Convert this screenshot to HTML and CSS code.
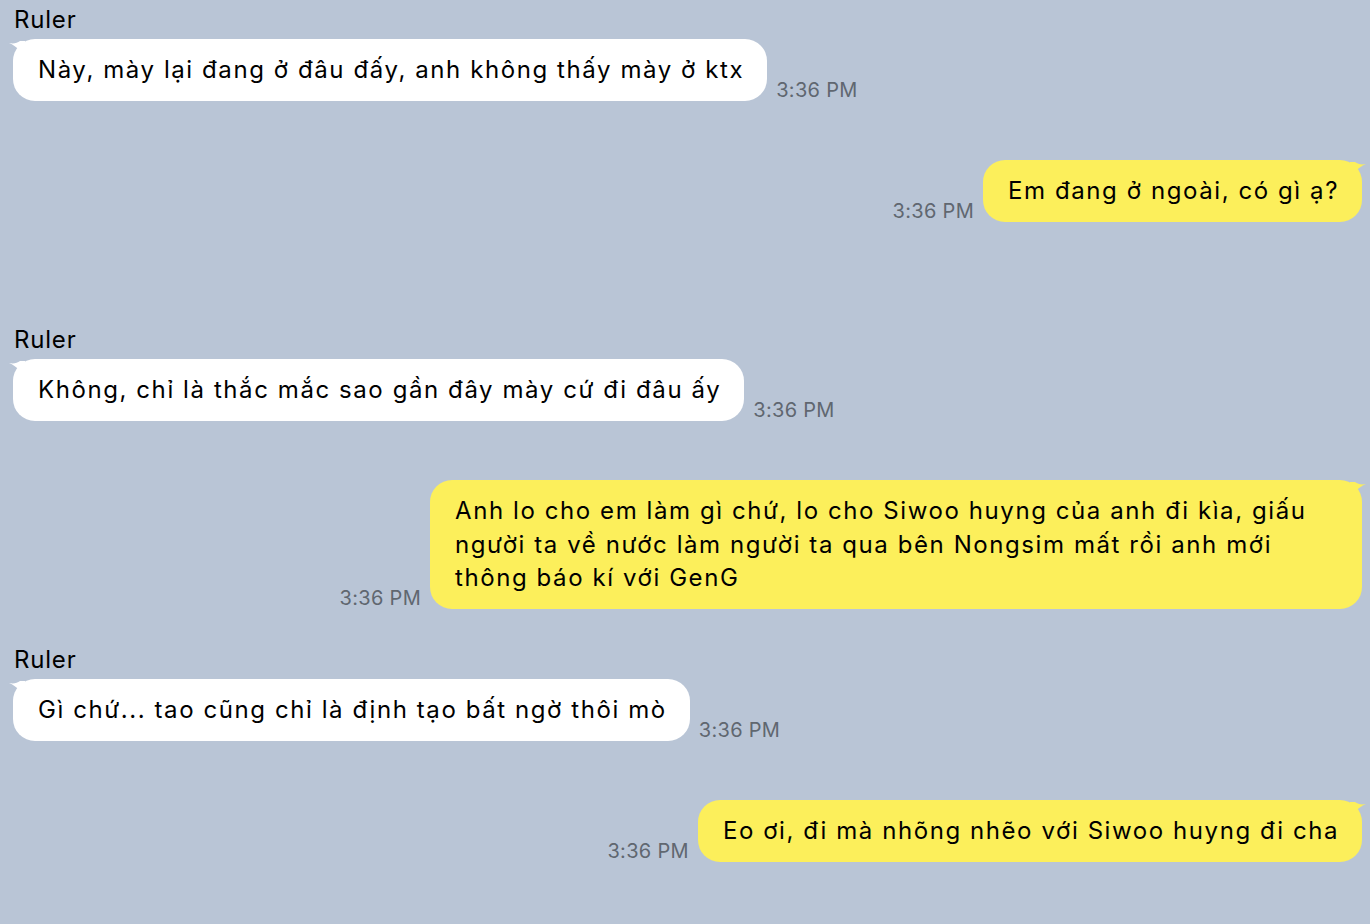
FILE: index.html
```html
<!DOCTYPE html>
<html lang="vi">
<head>
<meta charset="utf-8">
<title>Chat</title>
<link rel="stylesheet" href="styles.css">
</head>
<body>
<div class="chat">
  <div class="slot in">
    <div class="name">Ruler</div>
    <div class="row">
      <div class="bubble white"><svg class="tail tail-l" viewBox="0 0 16 16"><path d="M0 2 C5 3 8 2 11 0 L16 0 L16 16 C13 12 8 5 0 2 Z"/></svg>Này, mày lại đang ở đâu đấy, anh không thấy mày ở ktx</div>
      <div class="time">3:36 PM</div>
    </div>
  </div>
  <div class="slot out">
    <div class="row">
      <div class="time">3:36 PM</div>
      <div class="bubble yellow"><svg class="tail tail-r" viewBox="0 0 16 16"><path d="M16 2 C11 3 8 2 5 0 L0 0 L0 16 C3 12 8 5 16 2 Z"/></svg>Em đang ở ngoài, có gì ạ?</div>
    </div>
  </div>
  <div class="slot in">
    <div class="name">Ruler</div>
    <div class="row">
      <div class="bubble white"><svg class="tail tail-l" viewBox="0 0 16 16"><path d="M0 2 C5 3 8 2 11 0 L16 0 L16 16 C13 12 8 5 0 2 Z"/></svg>Không, chỉ là thắc mắc sao gần đây mày cứ đi đâu ấy</div>
      <div class="time">3:36 PM</div>
    </div>
  </div>
  <div class="slot out">
    <div class="row">
      <div class="time">3:36 PM</div>
      <div class="bubble yellow wide"><svg class="tail tail-r" viewBox="0 0 16 16"><path d="M16 2 C11 3 8 2 5 0 L0 0 L0 16 C3 12 8 5 16 2 Z"/></svg>Anh lo cho em làm gì chứ, lo cho Siwoo huyng của anh đi kìa, giấu người ta về nước làm người ta qua bên Nongsim mất rồi anh mới thông báo kí với GenG</div>
    </div>
  </div>
  <div class="slot in">
    <div class="name">Ruler</div>
    <div class="row">
      <div class="bubble white"><svg class="tail tail-l" viewBox="0 0 16 16"><path d="M0 2 C5 3 8 2 11 0 L16 0 L16 16 C13 12 8 5 0 2 Z"/></svg>Gì chứ... tao cũng chỉ là định tạo bất ngờ thôi mò</div>
      <div class="time">3:36 PM</div>
    </div>
  </div>
  <div class="slot out">
    <div class="row">
      <div class="time">3:36 PM</div>
      <div class="bubble yellow"><svg class="tail tail-r" viewBox="0 0 16 16"><path d="M16 2 C11 3 8 2 5 0 L0 0 L0 16 C3 12 8 5 16 2 Z"/></svg>Eo ơi, đi mà nhõng nhẽo với Siwoo huyng đi cha</div>
    </div>
  </div>
</div>
</body>
</html>
```
FILE: styles.css
```css
html, body {
  margin: 0;
  padding: 0;
  background: #b9c5d6;
  font-family: Inter, "Liberation Sans", Arial, sans-serif;
  color: #000;
}
.chat {
  display: flex;
  flex-direction: column;
  padding: 0 8px 0 13px;
}
.slot {
  flex: none;
  height: 160px;
  display: flex;
  flex-direction: column;
}
.slot.out {
  align-items: flex-end;
}
.name {
  font-size: 24px;
  line-height: 32px;
  letter-spacing: 0.8px;
  padding-top: 4px;
  margin-bottom: 3px;
  margin-left: 1px;
}
.row {
  display: flex;
  align-items: flex-end;
  gap: 9px;
}
.bubble {
  position: relative;
  font-size: 24px;
  line-height: 33.5px;
  letter-spacing: 1.58px;
  padding: 14px 23px 14px 25px;
  border-radius: 22px;
  max-width: 884px;
}
.bubble.white { background: #ffffff; }
.bubble.yellow { background: #fcef5b; }
.tail {
  position: absolute;
  top: 2px;
  width: 16px;
  height: 16px;
}
.white .tail { fill: #ffffff; }
.yellow .tail { fill: #fcef5b; }
.tail-l { left: -4px; }
.tail-r { right: -4px; }
.time {
  font-size: 20px;
  line-height: 20px;
  letter-spacing: 0.3px;
  color: #606770;
  white-space: nowrap;
  flex: none;
  margin-bottom: 1px;
}
```
